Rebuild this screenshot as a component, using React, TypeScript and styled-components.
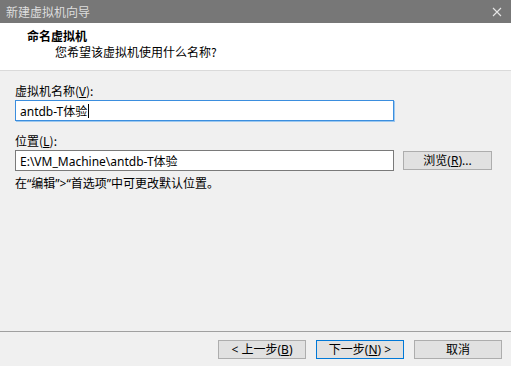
import React from "react";
import styled, { createGlobalStyle } from "styled-components";

const GlobalStyle = createGlobalStyle`
  html, body {
    margin: 0;
    padding: 0;
    background: #f0f0f0;
  }
  body {
    font-family: "Noto Sans", "Noto Sans CJK SC", sans-serif;
    font-size: 12px;
    color: #000;
  }
`;

const App: React.FC = () => {
  return (
    <>
      <GlobalStyle />
      <Window>
        <TitleBar>
          <TitleText>新建虚拟机向导</TitleText>
          <CloseIcon viewBox="0 0 10 10">
            <path d="M1 1 L9 9 M9 1 L1 9" stroke="#e6e6e6" strokeWidth="1.1" />
          </CloseIcon>
        </TitleBar>

        <Header>
          <HeaderTitle>命名虚拟机</HeaderTitle>
          <HeaderSub>您希望该虚拟机使用什么名称?</HeaderSub>
        </Header>

        <Body>
          <Field>
            <Label>
              虚拟机名称(<u>V</u>):
            </Label>
            <Row>
              <TextBox focused>
                antdb-T体验<Caret />
              </TextBox>
            </Row>
          </Field>

          <Field>
            <Label>
              位置(<u>L</u>):
            </Label>
            <Row>
              <TextBox>E:\VM_Machine\antdb-T体验</TextBox>
              <Button wide>
                浏览(<u>R</u>)...
              </Button>
            </Row>
            <Hint>在“编辑”&gt;“首选项”中可更改默认位置。</Hint>
          </Field>
        </Body>

        <Footer>
          <Button>
            &lt; 上一步(<u>B</u>)
          </Button>
          <Button primary>
            下一步(<u>N</u>) &gt;
          </Button>
          <Button>取消</Button>
        </Footer>
      </Window>
    </>
  );
};

export default App;

const Window = styled.div`
  width: 511px;
  height: 366px;
  display: flex;
  flex-direction: column;
  background: #f0f0f0;
  overflow: hidden;
`;

const TitleBar = styled.div`
  height: 23px;
  flex: none;
  background: #777777;
  display: flex;
  align-items: center;
  justify-content: space-between;
  padding: 0 9px 0 6px;
`;

const TitleText = styled.span`
  color: #dedede;
  font-size: 12px;
  font-family: "Noto Sans CJK SC", sans-serif;
`;

const CloseIcon = styled.svg`
  width: 10px;
  height: 10px;
`;

const Header = styled.div`
  height: 48px;
  flex: none;
  background: #ffffff;
  border-bottom: 1px solid #dadada;
  box-sizing: border-box;
  padding: 5px 0 0 27px;
  display: flex;
  flex-direction: column;
  font-family: "Noto Sans CJK SC", sans-serif;
  line-height: 16px;
`;

const HeaderTitle = styled.div`
  font-weight: bold;
  font-size: 12px;
`;

const HeaderSub = styled.div`
  font-size: 12px;
  padding-left: 28px;
`;

const Body = styled.div`
  flex: 1;
  padding: 12px 19px 0 15px;
  display: flex;
  flex-direction: column;
  gap: 12px;
`;

const Field = styled.div`
  display: flex;
  flex-direction: column;
`;

const Label = styled.div`
  font-family: "Noto Sans CJK SC", sans-serif;
  line-height: 16px;
  margin-bottom: 1px;
`;

const Row = styled.div`
  display: flex;
  align-items: center;
  gap: 9px;
`;

const TextBox = styled.div<{ focused?: boolean }>`
  width: 379px;
  height: 21px;
  box-sizing: border-box;
  background: #ffffff;
  border: 1px solid ${(p) => (p.focused ? "#3b8ede" : "#7a7a7a")};
  box-shadow: ${(p) => (p.focused ? "1px 1px 0 #9cc8f0" : "none")};
  padding: 0 4px;
  display: flex;
  align-items: center;
  font-family: "Noto Sans", "Noto Sans CJK SC", sans-serif;
  font-size: 12px;
  white-space: nowrap;
`;

const Caret = styled.span`
  display: inline-block;
  width: 1px;
  height: 14px;
  background: #000;
  margin-left: 1px;
`;

const Hint = styled.div`
  margin-top: 5px;
  font-family: "Noto Sans", "Noto Sans CJK SC", sans-serif;
  line-height: 16px;
`;

const Footer = styled.div`
  height: 35px;
  flex: none;
  border-top: 1px solid #a0a0a0;
  box-sizing: border-box;
  display: flex;
  justify-content: flex-end;
  align-items: flex-start;
  gap: 10px;
  padding: 8px 9px 0 0;
`;

const Button = styled.button<{ primary?: boolean; wide?: boolean }>`
  width: ${(p) => (p.wide ? "89px" : "88px")};
  height: 19px;
  box-sizing: border-box;
  background: #e1e1e1;
  border: 1px solid ${(p) => (p.primary ? "#0078d7" : "#adadad")};
  padding: 0;
  font-family: "Noto Sans", "Noto Sans CJK SC", sans-serif;
  font-size: 12px;
  color: #000;
  display: flex;
  align-items: center;
  justify-content: center;
  line-height: 1;
`;
